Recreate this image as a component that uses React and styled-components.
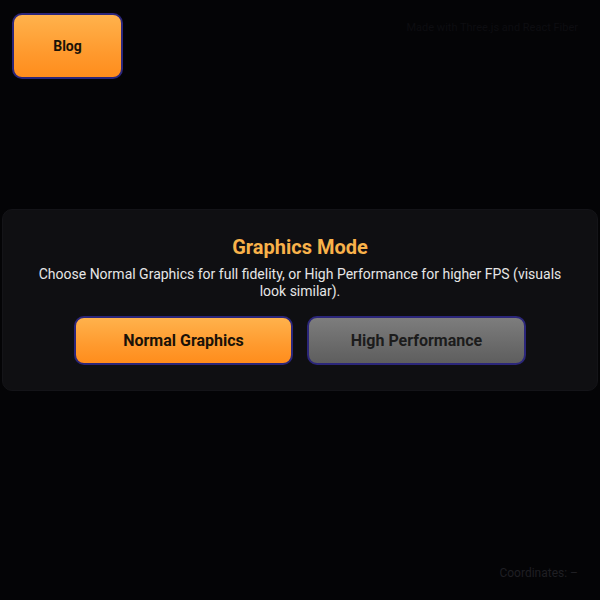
import React, { useState } from "react";
import styled, { createGlobalStyle } from "styled-components";

const GlobalStyle = createGlobalStyle`
    html, body {
        margin: 0;
        padding: 0;
        background: #040406;
        font-family: Roboto, "Noto Sans", "Liberation Sans", sans-serif;
    }
`;

const modes = [
    { id: "normal", label: "Normal Graphics" },
    { id: "performance", label: "High Performance" },
];

function App() {
    const [mode, setMode] = useState("normal");

    return (
        <>
            <GlobalStyle />
            <Page>
                <TopBar>
                    <BlogButton>Blog</BlogButton>
                    <Credits>Made with Three.js and React Fiber</Credits>
                </TopBar>

                <ModePanel>
                    <Title>Graphics Mode</Title>
                    <Description>
                        Choose Normal Graphics for full fidelity, or High Performance for higher FPS (visuals look similar).
                    </Description>
                    <Choices>
                        {modes.map((m) => (
                            <ModeButton
                                key={m.id}
                                $active={mode === m.id}
                                onClick={() => setMode(m.id)}
                            >
                                {m.label}
                            </ModeButton>
                        ))}
                    </Choices>
                </ModePanel>

                <Footer>
                    <Coordinates>Coordinates: –</Coordinates>
                </Footer>
            </Page>
        </>
    );
}

const Page = styled.div`
    height: 600px;
    display: grid;
    grid-template-rows: 1fr auto 1fr;
    color: #e8e8e8;
`;

const TopBar = styled.header`
    align-self: start;
    display: flex;
    justify-content: space-between;
    align-items: flex-start;
    padding: 13px 22px 0 12px;
`;

const orange = `linear-gradient(180deg, #ffb24c 0%, #ff9a2e 60%, #ff8d1c 100%)`;
const grey = `linear-gradient(180deg, #7d7d7d 0%, #6a6a6a 60%, #5e5e5e 100%)`;

const BlogButton = styled.button`
    width: 111px;
    height: 66px;
    border: 2px solid #2b267a;
    border-radius: 10px;
    background: ${orange};
    color: #1a1208;
    font-family: inherit;
    font-size: 14px;
    font-weight: 700;
    cursor: pointer;
`;

const Credits = styled.span`
    margin-top: 8px;
    font-size: 11px;
    color: #0d0d11;
`;

const ModePanel = styled.section`
    margin: 0 2px;
    padding: 25px 20px 25px;
    background: #0f0f12;
    border: 1px solid #141418;
    border-radius: 10px;
    display: flex;
    flex-direction: column;
    align-items: center;
    text-align: center;
`;

const Title = styled.h2`
    margin: 0;
    font-size: 20px;
    font-weight: 700;
    line-height: 25px;
    color: #f9b24a;
`;

const Description = styled.p`
    margin: 6px 0 0;
    max-width: 530px;
    font-size: 14px;
    line-height: 17px;
    color: #e6e6e6;
`;

const Choices = styled.div`
    margin-top: 16px;
    display: flex;
    gap: 14px;
`;

const ModeButton = styled.button`
    width: 219px;
    height: 49px;
    border: 2px solid #2b267a;
    border-radius: 10px;
    background: ${(p) => (p.$active ? orange : grey)};
    color: ${(p) => (p.$active ? "#1a1208" : "#1c1c1c")};
    font-family: inherit;
    font-size: 16px;
    font-weight: 700;
    cursor: pointer;
`;

const Footer = styled.footer`
    align-self: end;
    display: flex;
    justify-content: flex-end;
    padding: 0 22px 20px 0;
`;

const Coordinates = styled.span`
    font-size: 12px;
    color: #1f1f23;
`;

export default App;
